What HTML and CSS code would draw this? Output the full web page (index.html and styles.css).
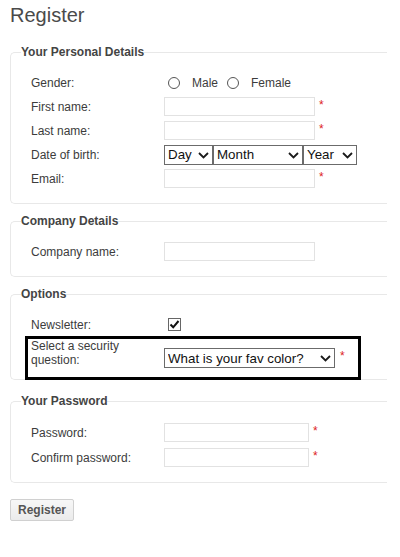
FILE: index.html
```html
<!DOCTYPE html>
<html lang="en">
<head>
  <meta charset="UTF-8">
  <title>Register</title>
  <link rel="stylesheet" href="styles.css">
</head>
<body>

<div class="page">
  <h1>Register</h1>

  <form class="register">
    <!-- Personal details -->
    <fieldset>
      <legend>Your Personal Details</legend>
      <div class="row">
        <span class="label">Gender:</span>
        <input type="radio" name="gender" id="male" class="radio"><label for="male" class="radio-text">Male</label>
        <input type="radio" name="gender" id="female" class="radio second"><label for="female" class="radio-text">Female</label>
      </div>
      <div class="row">
        <label class="label" for="first">First name:</label>
        <input type="text" id="first" class="text">
        <span class="req">*</span>
      </div>
      <div class="row">
        <label class="label" for="last">Last name:</label>
        <input type="text" id="last" class="text">
        <span class="req">*</span>
      </div>
      <div class="row">
        <span class="label">Date of birth:</span>
        <div class="dob">
          <span class="select day">
            <select><option>Day</option></select>
            <svg class="chevron" width="11" height="7" viewBox="0 0 11 7"><polyline points="1,1 5.5,5.5 10,1"/></svg>
          </span>
          <span class="select month">
            <select><option>Month</option></select>
            <svg class="chevron" width="11" height="7" viewBox="0 0 11 7"><polyline points="1,1 5.5,5.5 10,1"/></svg>
          </span>
          <span class="select year">
            <select><option>Year</option></select>
            <svg class="chevron" width="11" height="7" viewBox="0 0 11 7"><polyline points="1,1 5.5,5.5 10,1"/></svg>
          </span>
        </div>
      </div>
      <div class="row">
        <label class="label" for="email">Email:</label>
        <input type="text" id="email" class="text">
        <span class="req">*</span>
      </div>
    </fieldset>

    <!-- Company -->
    <fieldset>
      <legend>Company Details</legend>
      <div class="row">
        <label class="label" for="company">Company name:</label>
        <input type="text" id="company" class="text">
      </div>
    </fieldset>

    <!-- Options -->
    <fieldset class="options">
      <legend>Options</legend>
      <div class="row">
        <span class="label">Newsletter:</span>
        <span class="checkbox">
          <svg width="11" height="11" viewBox="0 0 11 11"><polyline points="1.5,5.5 4.2,8.3 9.5,2"/></svg>
        </span>
      </div>
      <div class="row highlight">
        <span class="label">Select a security question:</span>
        <span class="select question">
          <select><option>What is your fav color?</option></select>
          <svg class="chevron" width="11" height="7" viewBox="0 0 11 7"><polyline points="1,1 5.5,5.5 10,1"/></svg>
        </span>
        <span class="req">*</span>
      </div>
    </fieldset>

    <!-- Password -->
    <fieldset class="password">
      <legend>Your Password</legend>
      <div class="row">
        <label class="label" for="pw">Password:</label>
        <input type="password" id="pw" class="text short">
        <span class="req">*</span>
      </div>
      <div class="row">
        <label class="label" for="pw2">Confirm password:</label>
        <input type="password" id="pw2" class="text short">
        <span class="req">*</span>
      </div>
    </fieldset>

    <button type="button" class="btn-register">Register</button>
  </form>
</div>

</body>
</html>
```

FILE: styles.css
```css
body {
  margin: 0;
  font-family: "Liberation Sans", Arial, sans-serif;
  font-size: 12px;
  color: #3c3c3c;
  background: #fff;
}

.page {
  padding: 4px 0 0 10px;
}

h1 {
  margin: 0 0 18px;
  font-size: 20px;
  font-weight: normal;
  line-height: 23px;
  color: #4a4a4a;
}

.register {
  margin: 0;
}

fieldset {
  box-sizing: border-box;
  width: 377px;
  margin: 0 0 10px;
  padding: 14px 0 15px 10px;
  border: 1px solid #e8e8e8;
  border-right: 0;
  border-radius: 5px 0 0 5px;
}

legend {
  padding: 0;
  font-weight: bold;
  font-size: 12px;
  line-height: 14px;
  color: #444;
}

.row {
  display: flex;
  align-items: center;
  height: 19px;
  margin: 0 0 5px 10px;
}

.row:last-child {
  margin-bottom: 0;
}

.label {
  flex: 0 0 133px;
  width: 133px;
  line-height: 14px;
}

/* radios */
.radio {
  appearance: none;
  box-sizing: border-box;
  width: 12px;
  height: 12px;
  margin: 1px 12px 0 4px;
  border: 1px solid #555;
  border-radius: 50%;
  background: #fff;
}

.radio.second {
  margin-left: 9px;
}

.text {
  box-sizing: border-box;
  width: 151px;
  height: 19px;
  margin: 0;
  padding: 1px 3px;
  border: 1px solid #e2e2e2;
  font: 12px "Liberation Sans", Arial, sans-serif;
}

.text.short {
  width: 145px;
}

.req {
  margin-left: 4px;
  color: #d22;
  font-size: 12px;
  line-height: 14px;
  align-self: flex-start;
  padding-top: 1px;
}

/* selects */
.dob {
  display: flex;
}

.select {
  position: relative;
  display: block;
  height: 20px;
}

.select select {
  appearance: none;
  box-sizing: border-box;
  width: 100%;
  height: 20px;
  margin: 0;
  padding: 0 0 0 3px;
  border: 1px solid #6b6b6b;
  border-radius: 0;
  background: #fff;
  color: #111;
  font: 13.33px "Liberation Sans", Arial, sans-serif;
}

.chevron {
  position: absolute;
  right: 4px;
  top: 7px;
  pointer-events: none;
}

.chevron polyline {
  fill: none;
  stroke: #1a1a1a;
  stroke-width: 1.8;
}

.select.day { width: 49px; }
.select.month { width: 90px; }
.select.year { width: 54px; }
.select.question { width: 171px; }

/* checkbox */
.checkbox {
  box-sizing: border-box;
  display: flex;
  align-items: center;
  justify-content: center;
  width: 13px;
  height: 13px;
  margin-left: 4px;
  border: 1px solid #666;
  background: #fff;
}

.checkbox polyline {
  fill: none;
  stroke: #111;
  stroke-width: 2;
}

/* options */
.options {
  padding-bottom: 2px;
  margin-bottom: 14px;
}

.row.highlight {
  height: 38px;
  width: 330px;
  margin-top: 4px;
  margin-left: 7px;
  padding-left: 3px;
  box-sizing: border-box;
  outline: 3px solid #000;
}

.row.highlight .label {
  align-self: flex-start;
}

.row.highlight .req {
  margin-left: 5px;
  align-self: center;
  padding: 0 0 4px;
}

.password {
  padding-top: 15px;
  margin-bottom: 16px;
}

.password .row {
  margin-bottom: 6px;
}

.password .row:last-child {
  margin-bottom: 0;
}

.btn-register {
  display: block;
  height: 22px;
  margin: 0;
  padding: 0 7px;
  border: 1px solid #d0d0d0;
  border-radius: 2px;
  background: linear-gradient(#f7f7f7, #ebebeb);
  color: #555;
  font: bold 12px "Liberation Sans", Arial, sans-serif;
  cursor: pointer;
}
```
